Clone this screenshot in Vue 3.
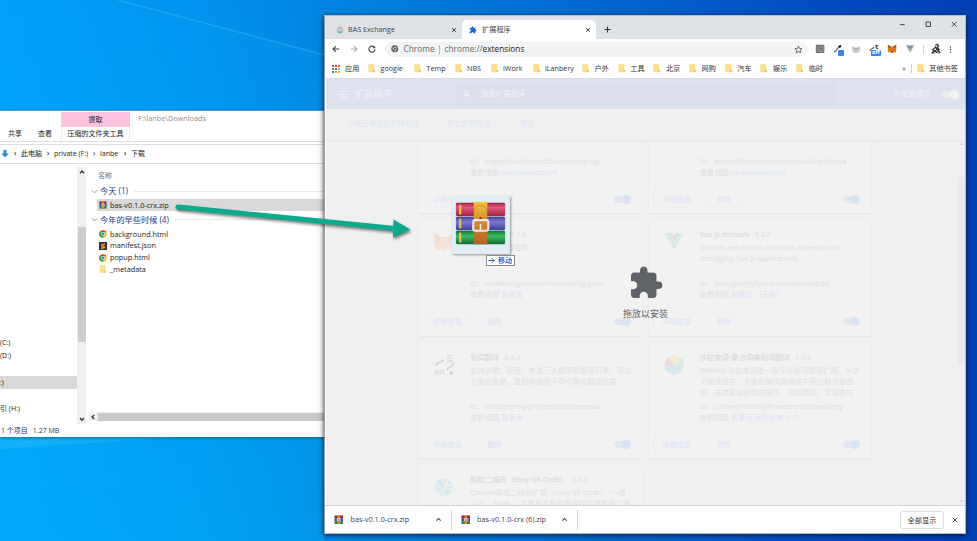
<script setup>
import { h } from 'vue'

const RarIcon = () =>
  h('svg', { viewBox: '0 0 20 20', class: 'rar' }, [
    h('path', { d: 'M1 1h18v6H1z', fill: '#a3203c' }),
    h('path', { d: 'M1 7h18v6H1z', fill: '#2c48c8' }),
    h('path', { d: 'M1 13h18v6H1z', fill: '#2d8a33' }),
    h('path', { d: 'M7.5 1h5v18h-5z', fill: '#e08a25' }),
    h('path', { d: 'M6 7h8v6H6z', fill: '#f4e6d0' }),
    h('path', { d: 'M8 9h4v3H8z', fill: '#b45a1c' })
  ])

const ChromeIcon = () =>
  h('svg', { viewBox: '0 0 20 20' }, [
    h('circle', { cx: 10, cy: 10, r: 9.5, fill: '#f9c515' }),
    h('path', { d: 'M10 10 1.8 5.2A9.5 9.5 0 0 1 18.3 5.4H10z', fill: '#e23a2e' }),
    h('path', { d: 'M1.8 5.2A9.5 9.5 0 0 0 9.2 19.5L13.5 12 10 10z', fill: '#2d9c48' }),
    h('circle', { cx: 10, cy: 10, r: 4.8, fill: '#fff' }),
    h('circle', { cx: 10, cy: 10, r: 3.7, fill: '#3a7be8' })
  ])

const FolderIcon = () =>
  h('svg', { viewBox: '0 0 8 10' }, [
    h('path', { d: 'M.5.5h6v7h1v2h-7z', fill: '#ffe08a', stroke: '#ebc75c', 'stroke-width': 0.5 }),
    h('path', { d: 'M5.7 7.2h2v2.3h-2z', fill: '#f2c94e' })
  ])

const Puzzle = () =>
  h('svg', { viewBox: '0 0 24 24' }, [
    h('path', {
      fill: 'currentColor',
      d: 'M20.5 11H19V7c0-1.1-.9-2-2-2h-4V3.5C13 2.12 11.88 1 10.5 1S8 2.12 8 3.5V5H4c-1.1 0-1.99.9-1.99 2v3.8H3.5c1.49 0 2.7 1.21 2.7 2.7s-1.21 2.7-2.7 2.7H2V20c0 1.1.9 2 2 2h3.8v-1.5c0-1.49 1.21-2.7 2.7-2.7 1.49 0 2.7 1.21 2.7 2.7V22H17c1.1 0 2-.9 2-2v-4h1.5c1.38 0 2.5-1.12 2.5-2.5S21.88 11 20.5 11z'
    })
  ])

const files = [
  { name: 'background.html', icon: 'chrome' },
  { name: 'manifest.json', icon: 'sublime' },
  { name: 'popup.html', icon: 'chrome' },
  { name: '_metadata', icon: 'folder' }
]

const bookmarks = [
  { t: 'google', w: 46 }, { t: 'Temp', w: 40.5 }, { t: 'NBS', w: 36 }, { t: 'iWork', w: 42 },
  { t: 'iLanbery', w: 49.5 }, { t: '户外', w: 35.7 }, { t: '工具', w: 35.7 }, { t: '北京', w: 35.7 },
  { t: '网购', w: 35.7 }, { t: '汽车', w: 35.7 }, { t: '娱乐', w: 35.7 }, { t: '临时', w: 35.7 }
]

const cards = [
  { title: '', ver: '', desc: [], id: 'dogkpdfcklifaemcdfbildhcofnopogp', view: 'background.html', icon: '' },
  { title: 'ColorZilla', ver: '', desc: ['', 'picker and your personal color history.'], id: 'hmdcmlfkchdmnmnmheododdhjedfccka', view: 'background.html', icon: '' },
  { title: 'MetaMask', ver: '7.7.8', desc: ['以太坊浏览器插件'], id: 'nkbihfbeogaeaoehlefnkodbefgpgknn', view: '背景页', icon: 'fox' },
  { title: 'Vue.js devtools', ver: '5.3.3', desc: ['Chrome and Firefox DevTools extension for', 'debugging Vue.js applications.'], id: 'nhdogjmejiglipccpnnnanhbledajbpd', view: '背景页 （无效）', icon: 'vue' },
  { title: '划词翻译', ver: '6.4.8', desc: ['支持谷歌、百度、有道三大翻译和朗读引擎，可以', '方便的查看、复制和朗读不同引擎的翻译结果。'], id: 'ikhdkkncnoglghljlkmcimlnlhkeamad', view: '背景页', icon: 'trans' },
  { title: '沙拉查词-聚合词典划词翻译', ver: '7.9.3', desc: ['Saladict 沙拉查词是一款专业划词翻译扩展，为交', '叉阅读而生。大量权威词典涵盖中英日韩法德西', '语，支持复杂的划词操作、网页翻译、生词本与'], id: 'cdonnmffkdaoajfknoeeecmchibpmkmg', view: '背景页,另外还有 1 个...', icon: 'salad' },
  { title: '轻松二维码（Easy QR Code）', ver: '2.0.0', desc: ['Chrome离线二维码扩展（Easy QR Code）：一键', '点击，为URL、文本及手机号等内容生成离线二维'], id: '', view: '', icon: 'qr' }
]

const downloads = ['bas-v0.1.0-crx.zip', 'bas-v0.1.0-crx (6).zip']
</script>

<template>
  <div class="desktop">
    <svg class="beams" viewBox="0 0 977 541">
      <path d="M118 0 324 56V110H0V0z" fill="#0ab0ff" opacity=".12" />
      <path d="M118 0 324 55" stroke="#3bbcff" stroke-width="1.4" opacity=".45" />
      <path d="M0 449 180 437H0z" fill="#3cc6ff" opacity=".3" />
    </svg>

    <section class="explorer">
      <div class="ribbon">
        <div class="tabs"><span>共享</span><span>查看</span></div>
        <div class="context"><b>提取</b><span>压缩的文件夹工具</span></div>
        <div class="path">F:\lanbe\Downloads</div>
      </div>
      <div class="crumbs">
        <svg class="down" viewBox="0 0 10 10"><path d="M3.2.5h3.6V5h2.9L5 9.8.3 5h2.9z" fill="#2389dc" /></svg>
        <i>›</i><span class="c1">此电脑</span><i>›</i><span class="c2">private (F:)</span><i>›</i><span class="c3">lanbe</span><i>›</i><span>下载</span>
      </div>
      <div class="body">
        <div class="tree">
          <div class="drive">(C:)</div>
          <div class="drive">(D:)</div>
          <div class="drive"></div>
          <div class="drive sel">:)</div>
          <div class="drive"></div>
          <div class="drive">引 (H:)</div>
        </div>
        <div class="vbar">
          <svg viewBox="0 0 8 8"><path d="M2 5.2 4 3l2 2.200" /></svg>
          <div class="thumb"></div>
          <svg viewBox="0 0 8 8"><path d="M2 3 4 5.200 6 3" /></svg>
        </div>
        <div class="list">
          <div class="col">名称</div>
          <div class="group"><svg viewBox="0 0 8 8"><path d="M1 2.500 4 5.500 7 2.500" /></svg><span>今天 (1)</span><hr /></div>
          <div class="file picked"><RarIcon /><span>bas-v0.1.0-crx.zip</span></div>
          <div class="group second"><svg viewBox="0 0 8 8"><path d="M1 2.500 4 5.500 7 2.500" /></svg><span>今年的早些时候 (4)</span><hr /></div>
          <div v-for="f in files" :key="f.name" class="file">
            <ChromeIcon v-if="f.icon === 'chrome'" />
            <FolderIcon v-else-if="f.icon === 'folder'" />
            <svg v-else viewBox="0 0 20 20"><path d="M0 0h20v20H0z" fill="#333" /><path d="M15 3v4l-6 2 6 2v4L5 18v-4l6-2-6-2V6z" fill="#ff9a1f" /></svg>
            <span>{{ f.name }}</span>
          </div>
          <div class="hbar"><svg viewBox="0 0 8 8"><path d="M5.200 2 3 4l2.200 2" /></svg><div></div></div>
        </div>
      </div>
      <div class="status">1 个项目<span>1.27 MB</span></div>
    </section>

    <section class="browser">
      <div class="strip">
        <div class="tab">
          <svg class="fav" viewBox="0 0 10 10"><path d="M1 3.500a4.300 4.300 0 0 1 8 0z" fill="#f0a58c" /><path d="M.5 4.200h9v1.600h-9z" fill="#a9c9dd" /><path d="M1 6.500a4.300 4.300 0 0 0 8 0z" fill="#68bfae" /></svg>
          <span>BAS Exchange</span><svg class="x" viewBox="0 0 8 8"><path d="m1.500 1.500 5 5m0-5-5 5" /></svg>
        </div>
        <div class="tab active">
          <Puzzle class="fav blue" /><span>扩展程序</span><svg class="x" viewBox="0 0 8 8"><path d="m1.500 1.500 5 5m0-5-5 5" /></svg>
        </div>
        <svg class="plus" viewBox="0 0 8 8"><path d="M4 .5v7M.5 4h7" /></svg>
        <div class="wctl">
          <svg viewBox="0 0 8 8"><path d="M1 4.500h6" /></svg>
          <svg viewBox="0 0 8 8"><path d="M1.300 1.300h5.400v5.400H1.300z" /></svg>
          <svg viewBox="0 0 8 8"><path d="m1 1 6 6m0-6L1 7" /></svg>
        </div>
      </div>

      <div class="nav">
        <div class="arrows">
          <svg viewBox="0 0 10 10"><path d="M9 5H1.500M5 1.300 1.300 5 5 8.700" /></svg>
          <svg class="dim" viewBox="0 0 10 10"><path d="M1 5h7.500M5 1.300 8.700 5 5 8.700" /></svg>
          <svg viewBox="0 0 10 10"><path d="M8.300 3.300A3.800 3.800 0 1 0 8.800 5.500" /><path d="M9 .8v3.400H5.600z" fill="#444" stroke="none" /></svg>
        </div>
        <div class="omni">
          <svg class="globe" viewBox="0 0 10 10"><circle cx="5" cy="5" r="4.600" fill="#55585c" /><circle cx="5" cy="5" r="2.100" fill="#55585c" stroke="#f1f3f4" stroke-width=".8" /><path d="M5 2.900h4M3.200 6 1.300 2.800M6.800 6 4.900 9.300" stroke="#f1f3f4" stroke-width=".6" /></svg>
          <span class="site">Chrome</span><em></em><span class="url">chrome://<b>extensions</b></span>
          <svg class="star" viewBox="0 0 24 24"><path d="m12 3 2.700 6.100 6.600.6-5 4.400 1.500 6.500-5.800-3.500-5.800 3.500 1.500-6.500-5-4.400 6.600-.6z" /></svg>
        </div>
        <div class="exts">
          <svg viewBox="0 0 12 12"><path d="M1.500 1.500h9v8.500h-9z" fill="#a8a8a8" stroke="#555" /><path d="M3.500 2v8M5 3.500h4M5 5.500h4M5 7.500h4" stroke="#444" stroke-width=".9" /></svg>
          <div class="ext"><svg viewBox="0 0 12 12"><path d="m1.500 10 5-6" stroke="#5a7262" stroke-width="1.500" /><path d="m6 3 2.500-2 1.500 1.500-2 2.500z" fill="#111" /></svg><i class="sq"></i></div>
          <svg viewBox="0 0 12 12"><path d="M1.500 2.500 4 4h4l2.500-1.500V6a4.500 4.500 0 0 1-9 0z" fill="#b9b9b9" /><path d="M3 6.500c2 3 5 2.500 6.500 0" stroke="#eee" fill="none" /></svg>
          <div class="ext"><svg viewBox="0 0 12 12"><path d="M1 8c1-3 3-2 5-4M7 2h4M9 1v5M8 4l3 2" stroke="#444" stroke-width="1.200" fill="none" /></svg><i>off</i></div>
          <svg viewBox="0 0 12 12"><path d="m1 1 3.500 2h3L11 1v5l-.6 4L8 9.500l-1 1H5l-1-1-2.400.5L1 6z" fill="#e2761b" /><path d="m1 1 3.500 2L3 5zM11 1 7.500 3 9 5zM5 8.500h2l-.3 2H5.300z" fill="#8a4310" /></svg>
          <svg viewBox="0 0 12 12"><path d="M1 1.500h3L6 5l2-3.500h3L6 10.500z" fill="#ababab" /><path d="M3.300 1.500H5l1 1.800 1-1.800h1.700L6 6z" fill="#777" /></svg>
          <em></em>
          <svg class="avatar" viewBox="0 0 12 12"><path d="M5 1.500 7.500.5 9 2 7.500 4l2 2.500L8 7l2.500 3.500M5 4 2 7l2 1-3 3M5 3l2 3-2 2 2 2.500" stroke="#222" stroke-width="1.400" fill="none" /><circle cx="3" cy="9.500" r="1.600" fill="none" stroke="#444" stroke-width=".8" /><circle cx="9" cy="9.500" r="1.600" fill="none" stroke="#444" stroke-width=".8" /></svg>
          <svg class="dots" viewBox="0 0 4 12"><circle cx="2" cy="2.500" r="1" /><circle cx="2" cy="6" r="1" /><circle cx="2" cy="9.500" r="1" /></svg>
        </div>
      </div>

      <div class="marks">
        <svg class="apps" viewBox="0 0 8 8"><path d="M0 0h2v2H0zM3 0h2v2H3zM6 0h2v2H6z" fill="#e0483d" /><path d="M0 3h2v2H0z" fill="#2e9c57" /><path d="M3 3h2v2H3z" fill="#3d7ce5" /><path d="M6 3h2v2H6zM3 6h2v2H3zM6 6h2v2H6z" fill="#eeb126" /><path d="M0 6h2v2H0z" fill="#2e9c57" /></svg>
        <span class="appl">应用</span>
        <div v-for="b in bookmarks" :key="b.t" class="mark" :style="{ width: b.w + 'px' }"><FolderIcon /><span>{{ b.t }}</span></div>
        <div class="more"><span>»</span><em></em><FolderIcon /><span>其他书签</span></div>
      </div>

      <div class="page">
        <header>
          <svg viewBox="0 0 10 10"><path d="M.5 1.600h9M.5 5h9M.5 8.400h9" /></svg>
          <h1>扩展程序</h1>
          <div class="search"><svg viewBox="0 0 10 10"><circle cx="4" cy="4" r="2.700" /><path d="m6 6 3.300 3.300" /></svg>搜索扩展程序</div>
          <label>开发者模式</label><div class="switch white"></div>
        </header>
        <div class="devbar"><span class="w1">加载已解压的扩展程序</span><span class="w2">打包扩展程序</span><span class="w3">更新</span></div>
        <main>
          <div class="grid">
            <article v-for="c in cards" :key="c.id">
              <div class="ico">
                <svg v-if="c.icon === 'fox'" viewBox="0 0 20 20"><path d="m0 1 7 4h6l7-4v9l-2 8-5-1-1.500 1.500h-3L7 17l-5 1-2-8z" fill="#f4e3d7" /><path d="m0 1 7 4-3 5zM20 1l-7 4 3 5z" fill="#efdccf" /></svg>
                <svg v-else-if="c.icon === 'vue'" viewBox="0 0 20 20"><path d="M0 1h5l5 8.500L15 1h5L10 18z" fill="#d9ebe4" /><path d="M5 1h3l2 3.500L12 1h3l-5 8.500z" fill="#d9dddf" /></svg>
                <svg v-else-if="c.icon === 'trans'" viewBox="0 0 20 20"><path d="M2 11c1-5 5-3 8-6M18 8c3 4-4 3-5 7" fill="none" stroke="#d5d5d5" stroke-width="1.800" /><circle cx="17.500" cy="18" r="2" fill="#d5d5d5" /><text x="12" y="6.500" font-size="7.500">英</text><text x="0" y="20" font-size="9.500">en</text></svg>
                <svg v-else-if="c.icon === 'salad'" viewBox="0 0 20 20"><path d="M.5 10a9.500 9.500 0 0 1 5-8L11 10z" fill="#f1d9d7" /><path d="M5 3 10 0l5 2 1 8h-6z" fill="#f3ecd2" /><path d="m15 2 4.500 3v5H14z" fill="#d8eadb" /><path d="M.3 10h19.400A9.700 9.700 0 0 1 .3 10z" fill="#d5e8ec" /></svg>
                <svg v-else-if="c.icon === 'qr'" viewBox="0 0 20 20"><circle cx="10" cy="10" r="9" fill="#d8e9ef" /><path d="M9 0l2 9 9-1M20 12l-9-1-2 9M0 8l9 3M9 11 5 18M11 9l4-7" stroke="#f1f1f1" stroke-width="1.600" fill="none" /></svg>
              </div>
              <div class="info">
                <div class="title"><b>{{ c.title }}</b><span>{{ c.ver }}</span></div>
                <div class="desc"><p v-for="(d, i) in c.desc" :key="i">{{ d }}</p></div>
                <div class="id">ID：{{ c.id }}</div>
                <div class="view">查看视图 <a>{{ c.view }}</a></div>
              </div>
              <footer><span class="b1">详细信息</span><span class="b2">删除</span><div class="switch"></div></footer>
            </article>
          </div>
          <div class="scroll"><i class="up"></i><div></div><i class="dn"></i></div>
          <div class="drop"><Puzzle /><span>拖放以安装</span></div>
        </main>
      </div>

      <div class="shelf">
        <div v-for="d in downloads" :key="d" class="dl"><RarIcon /><span>{{ d }}</span><svg class="chev" viewBox="0 0 8 8"><path d="M1.500 5.300 4 2.800l2.500 2.500" /></svg></div>
        <button>全部显示</button>
        <svg class="x" viewBox="0 0 8 8"><path d="m1 1 6 6m0-6L1 7" /></svg>
      </div>
    </section>

    <svg class="arrow" viewBox="0 0 250 50"><path d="M8 11 225 32.500" stroke="#0aab8c" stroke-width="5" stroke-linecap="round" /><path d="m223.500 23.500 17 10-17.500 8z" fill="#0aab8c" /></svg>

    <div class="ghost">
      <svg viewBox="0 0 58 58">
        <defs>
          <linearGradient id="red" x2="0" y2="1"><stop offset="0" stop-color="#a32445" /><stop offset=".35" stop-color="#e2577b" /><stop offset="1" stop-color="#9b2142" /></linearGradient>
          <linearGradient id="blu" x2="0" y2="1"><stop offset="0" stop-color="#4a4399" /><stop offset=".4" stop-color="#7b79d6" /><stop offset="1" stop-color="#413c91" /></linearGradient>
          <linearGradient id="grn" x2="0" y2="1"><stop offset="0" stop-color="#12753a" /><stop offset=".4" stop-color="#3dbd62" /><stop offset="1" stop-color="#0e6a30" /></linearGradient>
          <linearGradient id="belt" x2="0" y2="1"><stop offset="0" stop-color="#f1c63c" /><stop offset=".45" stop-color="#d38c2d" /><stop offset="1" stop-color="#b56326" /></linearGradient>
        </defs>
        <rect x="3" y="6" width="51" height="14" rx="1.500" fill="url(#red)" />
        <rect x="3" y="20.500" width="51" height="14" rx="1.500" fill="url(#blu)" />
        <rect x="3" y="35" width="51" height="14" rx="1.500" fill="url(#grn)" />
        <path d="M7.500 8v10M7.500 22.500v10M7.500 37v10" stroke="#f2c33d" stroke-width="2.200" />
        <rect x="21.500" y="5" width="14" height="44" fill="url(#belt)" />
        <path d="M22 15a6.500 6.500 0 0 1 13 0" fill="none" stroke="#c98b27" />
        <circle cx="28.500" cy="22" r="1.200" fill="#6a3310" />
        <rect x="21" y="24" width="15.500" height="11" rx="2" fill="none" stroke="#e8e8ea" stroke-width="2.200" />
        <path d="M28.500 28v6" stroke="#f4f4f4" stroke-width="1.600" />
      </svg>
    </div>
    <div class="tip"><svg viewBox="0 0 8 8"><path d="M.5 4h6.500M4 1l3 3-3 3" /></svg>移动</div>
  </div>
</template>

<style>
html, body { overflow: hidden; }
</style>

<style scoped>
* { box-sizing: border-box; }
svg { display: block; flex: none; fill: none; overflow: visible; }
i { font-style: normal; }
.desktop {
  position: relative; width: 977px; height: 541px; overflow: hidden; white-space: nowrap;
  font: 7.5px/1 "Open Sans", "Noto Sans CJK SC", sans-serif; color: #222;
  background:
    linear-gradient(180deg, transparent 0, rgba(0, 200, 255, .28) 100%) 0 0 / 324px 100% no-repeat,
    linear-gradient(90deg, #029ff8 0, #0293ee 200px, #0280dc 360px, #0462ca 640px, #0349bd 850px, #023fb2 977px);
}
.beams { position: absolute; inset: 0; width: 977px; height: 541px; }

.explorer {
  position: absolute; left: 0; top: 110px; width: 324px; height: 327px; background: #fff;
  display: flex; flex-direction: column; box-shadow: 0 1px 3px rgba(0, 40, 80, .5); border-top: 1px solid #4a9bd0;
}
.ribbon { display: flex; height: 31px; border-bottom: 1px solid #dcdcdc; }
.tabs { display: flex; align-items: center; width: 61px; padding: 14px 0 0 8px; gap: 16px; height: 31px; font-size: 7px; }
.context { width: 69px; display: flex; flex-direction: column; text-align: center; font-size: 7px; border-right: 1px solid #eee; border-left: 1px solid #eee; }
.context b { background: #ffc3df; font-weight: 400; height: 15px; line-height: 15px; margin: 1px -1px 0; }
.context span { line-height: 14px; }
.path { padding: 4px 0 0 8px; color: #909090; font-size: 7.3px; }
.crumbs { height: 20px; margin-top: 2px; border: 1px solid #dedede; border-width: 1px 0; display: flex; align-items: center; padding-left: 1px; font-size: 7px; }
.crumbs .down { width: 8px; height: 9px; }
.crumbs i { width: 12px; text-align: center; font-size: 9px; line-height: 6px; margin: -2px 0 0 0; }
.crumbs .down + i { margin-left: 0; }
.crumbs span { flex: none; }
.c1 { width: 21px; } .c2 { width: 34px; } .c3 { width: 19px; }
.body { display: flex; height: 262px; }
.tree { width: 77px; padding-top: 172px; font-size: 7px; }
.drive { height: 13.300px; line-height: 13.300px; }
.sel { background: #d9d9d9; }
.vbar { width: 9px; margin-top: 3px; background: #f0f0f0; height: 257px; display: flex; flex-direction: column; align-items: center; padding: 1px 0; }
.vbar svg, .hbar svg { width: 8px; height: 8px; stroke: #333; stroke-width: 1.300; }
.thumb { width: 8px; height: 115px; background: #cdcdcd; margin: 51px 0 auto; }
.list { flex: 1; padding: 8px 0 0 5px; display: flex; flex-direction: column; }
.col { color: #5f6f86; font-size: 7px; line-height: 8px; padding-left: 7px; margin-bottom: 4px; }
.group { display: flex; align-items: center; color: #22378d; font-size: 8.200px; height: 15px; gap: 2px; margin: 0; }
.group svg { width: 7px; height: 7px; stroke: #777; stroke-width: .9; }
.group hr { flex: 1; border: 0; border-top: 1px solid #e8e8e8; margin: 0 0 0 4px; }
.group.second { height: 15px; margin: 1px 0; }
.file { display: flex; align-items: center; gap: 3px; height: 11.700px; padding-left: 8px; font-size: 7.300px; }
.file svg { width: 8px; height: 8px; }
.picked { background: #d9d9d9; height: 12.500px; margin-left: 6px; padding-left: 2px; }
.hbar { margin: auto 0 4px -2px; display: flex; align-items: center; height: 9px; background: #f0f0f0; gap: 1px; }
.hbar div { flex: 1; height: 8px; background: #cacaca; }
.status { height: 12px; line-height: 12px; padding-left: 1px; color: #24405f; font-size: 7px; }
.status span { margin-left: 5px; color: #333; }

.browser {
  position: absolute; left: 324px; top: 15px; width: 642px; height: 519px; background: #fff;
  border: 1px solid #b9bec6; border-left-color: #9b9b9b; box-shadow: 0 1px 4px rgba(0, 10, 50, .75), -3px 2px 6px rgba(0, 0, 0, .12);
  display: flex; flex-direction: column;
}
.strip { height: 23px; background: #dee1e6; display: flex; align-items: flex-end; padding-left: 11px; flex: none; }
.tab { width: 126px; height: 19px; display: flex; align-items: center; padding-right: 5px; font-size: 7.200px; color: #444; }
.tab .fav { width: 8px; height: 8px; margin-right: 4px; }
.tab .fav.blue { color: #1a66dc; margin-right: 5px; }
.tab span { flex: 1; }
.x { width: 6px; height: 6px; stroke: #333; stroke-width: 1.200; }
.tab.active { width: 134px; background: #fff; border-radius: 5px 5px 0 0; padding: 0 5px 0 7px; }
.plus { width: 7px; height: 7px; margin: 0 0 6px 8px; stroke: #333; stroke-width: 1.300; }
.wctl { margin: 0 8px 11.500px auto; display: flex; gap: 19.500px; }
.wctl svg { width: 6.500px; height: 6.500px; stroke: #333; stroke-width: 1.100; }
.nav { height: 20px; flex: none; display: flex; align-items: center; padding: 0 7px 0 7px; }
.arrows { display: flex; gap: 10px; width: 53px; }
.arrows svg { width: 8px; height: 8px; stroke: #444; stroke-width: 1.400; }
.arrows .dim { stroke: #aaa; }
.omni { width: 423px; height: 15px; border-radius: 8px; background: #f1f3f4; display: flex; align-items: center; padding: 0 5px; font-size: 8.300px; color: #666a6e; }
.globe { width: 7.500px; height: 7.500px; margin: 0 5px 0 1px; }
.omni em { width: 1px; height: 9px; background: #b5b8bb; margin: 0 5px 0 4px; }
.omni b { color: #222; font-weight: 400; }
.star { width: 9px; height: 9px; margin-left: auto; stroke: #444; stroke-width: 2; }
.exts { display: flex; align-items: center; flex: 1; padding-left: 7px; gap: 7.800px; }
.exts svg { width: 10.200px; height: 10.200px; }
.ext { position: relative; }
.ext i { position: absolute; left: 2px; top: 6px; width: 10px; height: 6px; border-radius: 1px; background: #3f82f7; color: #fff; font: 700 5.500px/5.500px "Open Sans", sans-serif; text-align: center; }
.ext i.sq { left: 5px; width: 6px; }
.exts em { width: 1px; height: 9px; background: #d3d3d3; margin: 0 -1px 0 0; }
.exts .dots { width: 3px; height: 9px; fill: #444; }
.marks { height: 19px; flex: none; display: flex; align-items: center; padding: 0 7px 0 7px; font-size: 7.200px; color: #333; }
.apps { width: 8px; height: 8px; }
.appl { width: 28px; padding-left: 5px; }
.mark, .more { display: flex; align-items: center; gap: 5px; }
.mark svg, .more svg { width: 7.500px; height: 8.500px; }
.more { margin-left: auto; }
.more em { width: 1px; height: 9px; background: #ccc; }

.page { flex: 1; min-height: 0; background: #f0f0f0; margin: 0 0 0 1px; display: flex; flex-direction: column; font-family: Roboto, "Noto Sans CJK SC", sans-serif; overflow: hidden; }
header { height: 31px; background: #dde2ee; border-top: 1px solid #d6dbe5; display: flex; align-items: center; padding: 0 6px 0 13px; color: #f0f2f7; flex: none; }
header > svg { width: 9px; height: 9px; stroke: #eff1f6; stroke-width: 1.200; }
h1 { font-size: 9.200px; font-weight: 400; margin: 0; padding-left: 7px; width: 108px; }
.search { width: 379px; height: 21.500px; background: #dbdfe9; display: flex; align-items: center; padding-left: 7px; font-size: 7.400px; gap: 10px; }
.search svg { width: 8px; height: 8px; stroke: #f0f2f7; stroke-width: 1.300; }
label { margin: 0 11px 0 auto; font-size: 7.300px; }
.switch { width: 14.500px; height: 7px; border-radius: 4px; background: #e2e8f2; position: relative; }
.switch::after { content: ""; position: absolute; right: -2.500px; top: -1px; width: 9px; height: 9px; border-radius: 50%; background: #dae3f1; }
.switch.white { background: #e9ebf0; margin-right: 3px; }
.switch.white::after { background: #f3f3f3; }
.devbar { height: 31px; flex: none; display: flex; gap: 9px; padding: 5px 0 0 12px; box-shadow: 0 1px 2px #e4e4e4; position: relative; z-index: 1; }
.devbar span { height: 18px; line-height: 17px; text-align: center; border: 1px solid #eceef2; border-radius: 2px; color: #dfe5f1; font-size: 7.300px; }
.w1 { width: 91px; } .w2 { width: 62px; } .w3 { width: 37px; }
main { flex: 1; min-height: 0; position: relative; display: flex; overflow: hidden; }
.grid { display: grid; grid-template-columns: 222.500px 222.500px; grid-auto-rows: 115.500px; gap: 7px; margin: -42.500px 0 0 93px; height: 0; }
article { background: #f2f2f2; box-shadow: 0 1px 2px #e3e3e3; border-radius: 2px; display: grid; grid-template-columns: 51px 1fr; grid-template-rows: 92px 1fr; color: #e0e0e0; font-size: 7.330px; }
.ico { padding: 12px 0 0 15px; }
.ico svg { width: 20px; height: 20px; }
.ico text { fill: #d8d8d8; }
.info { padding-top: 9px; }
.title { height: 11px; line-height: 11px; display: flex; gap: 5px; }
.title b { font-weight: 500; color: #dadada; }
.desc { height: 38px; padding-top: 2px; line-height: 11.200px; }
.desc p { margin: 0; height: 11.200px; }
.id, .view { line-height: 11px; }
a { color: #dbe2f2; }
footer { grid-column: 1 / 3; display: flex; align-items: center; padding: 0 13.500px 4px 4.500px; color: #dbe3f3; }
footer span { height: 17px; line-height: 16px; text-align: center; border: 1px solid #eeeff1; border-radius: 2px; }
.b1 { width: 48px; margin-right: 5px; } .b2 { width: 36px; }
footer .switch { margin-left: auto; }
.scroll { margin-left: auto; width: 7px; display: flex; flex-direction: column; align-items: center; padding: 3px 0; }
.scroll div { width: 7px; height: 187px; background: #e9e9e9; margin: 32px 0 auto; }
.scroll i { border: 2px solid transparent; }
.up { border-bottom-color: #ccc !important; border-top: 0 !important; }
.dn { border-top-color: #ccc !important; border-bottom: 0 !important; }
.drop { position: absolute; left: 0; right: 0; top: 125px; display: flex; flex-direction: column; align-items: center; gap: 9px; color: #5f6368; font-size: 9px; }
.drop svg { width: 36px; height: 36px; filter: drop-shadow(0 0 .6px #fff) drop-shadow(0 0 .6px #fff); }
.shelf { height: 28px; flex: none; border-top: 1px solid #d4d4d4; display: flex; align-items: center; padding-right: 7px; color: #444; }
.dl { width: 126.500px; height: 20px; border-right: 1px solid #d2d2d2; display: flex; align-items: center; padding: 0 9px 0 9px; gap: 7px; font-size: 7.300px; }
.dl .rar { width: 9.500px; height: 9.500px; }
.dl .chev { width: 7px; height: 7px; margin-left: auto; stroke: #444; stroke-width: 1.200; }
.shelf button { margin: 0 8px 0 auto; width: 44px; height: 18px; background: #fff; border: 1px solid #dcdcdc; border-radius: 3px; font: 7.200px "Noto Sans CJK SC", sans-serif; color: #333; padding: 0; }

.arrow { position: absolute; left: 170px; top: 196px; width: 250px; height: 50px; filter: drop-shadow(1px 2px 1.500px rgba(0, 0, 0, .5)); }
.ghost { position: absolute; left: 452px; top: 196px; width: 58px; height: 58px; background: rgba(222, 238, 246, .86); border: 1px solid #dfecf2; box-shadow: 1px 1px 2px rgba(80, 90, 100, .6); }
.ghost svg { width: 56px; height: 56px; }
.tip { position: absolute; left: 486px; top: 255px; width: 29px; height: 11px; background: #fff; border: 1px solid #8a8a8a; display: flex; align-items: center; gap: 3px; padding-left: 1px; color: #1d3fc4; font-size: 7px; font-weight: 500; }
.tip svg { width: 7px; height: 7px; stroke: #1d3fc4; }
</style>
